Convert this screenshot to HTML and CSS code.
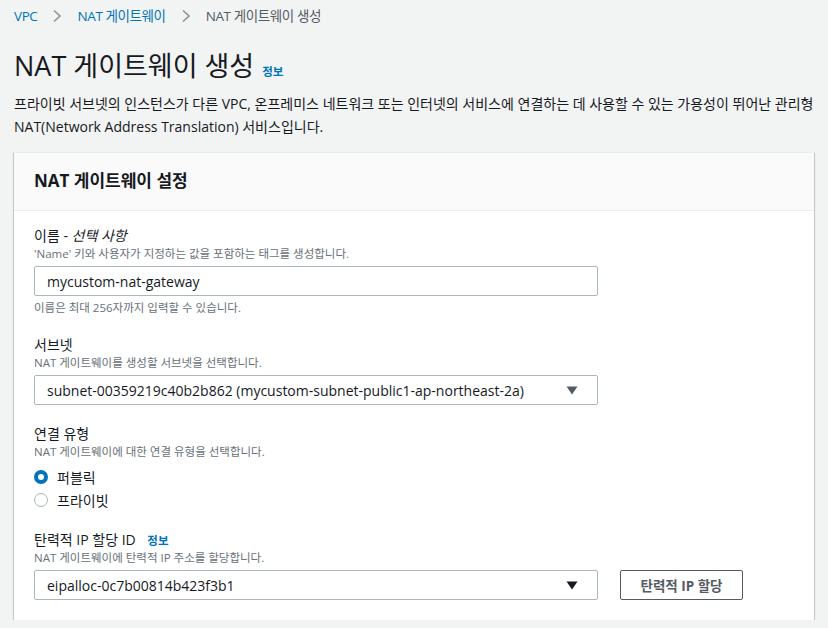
FILE: index.html
```html
<!DOCTYPE html>
<html lang="ko">
<head>
<meta charset="utf-8">
<link rel="stylesheet" href="styles.css">
</head>
<body>
<nav class="crumbs">
  <a class="crumb-link">VPC</a>
  <svg class="sep" width="10" height="14" viewBox="0 0 10 14"><path d="M2 1.5 L8 7 L2 12.5" fill="none" stroke="#879596" stroke-width="1.6"/></svg>
  <a class="crumb-link">NAT 게이트웨이</a>
  <svg class="sep" width="10" height="14" viewBox="0 0 10 14"><path d="M2 1.5 L8 7 L2 12.5" fill="none" stroke="#879596" stroke-width="1.6"/></svg>
  <span class="crumb-current">NAT 게이트웨이 생성</span>
</nav>

<h1 class="title"><span>NAT 게이트웨이 생성</span><a class="info">정보</a></h1>

<p class="intro">프라이빗 서브넷의 인스턴스가 다른 VPC, 온프레미스 네트워크 또는 인터넷의 서비스에 연결하는 데 사용할 수 있는 가용성이 뛰어난 관리형 NAT(Network Address Translation) 서비스입니다.</p>

<section class="card">
  <header class="card-head">NAT 게이트웨이 설정</header>
  <div class="card-body">
    <div class="field">
      <div class="label">이름 - <em>선택 사항</em></div>
      <div class="desc">'Name' 키와 사용자가 지정하는 값을 포함하는 태그를 생성합니다.</div>
      <div class="input">mycustom-nat-gateway</div>
      <div class="hint">이름은 최대 256자까지 입력할 수 있습니다.</div>
    </div>

    <div class="field">
      <div class="label">서브넷</div>
      <div class="desc">NAT 게이트웨이를 생성할 서브넷을 선택합니다.</div>
      <div class="input select">
        <span>subnet-00359219c40b2b862 (mycustom-subnet-public1-ap-northeast-2a)</span>
        <svg class="caret" width="12" height="9" viewBox="0 0 12 9"><path d="M0.5 0.5 H11.5 L6 8.5 Z" fill="#545b64"/></svg>
      </div>
    </div>

    <div class="field">
      <div class="label">연결 유형</div>
      <div class="desc">NAT 게이트웨이에 대한 연결 유형을 선택합니다.</div>
      <div class="radios">
        <div class="radio"><span class="dot on"></span><span>퍼블릭</span></div>
        <div class="radio"><span class="dot"></span><span>프라이빗</span></div>
      </div>
    </div>

    <div class="field">
      <div class="label">탄력적 IP 할당 ID <a class="info small">정보</a></div>
      <div class="desc">NAT 게이트웨이에 탄력적 IP 주소를 할당합니다.</div>
      <div class="row">
        <div class="input select">
          <span>eipalloc-0c7b00814b423f3b1</span>
          <svg class="caret dark" width="12" height="9" viewBox="0 0 12 9"><path d="M0.5 0.5 H11.5 L6 8.5 Z" fill="#16191f"/></svg>
        </div>
        <button class="btn">탄력적 IP 할당</button>
      </div>
    </div>
  </div>
</section>
</body>
</html>
```

FILE: styles.css
```css
* { box-sizing: border-box; }
html, body { margin: 0; padding: 0; }
body {
  background: #f2f3f3;
  color: #16191f;
  font-family: "Open Sans", "Noto Sans CJK KR", sans-serif;
  font-size: 14px;
  padding: 0 14px;
}
.crumbs {
  display: flex;
  align-items: center;
  gap: 14px;
  padding-top: 6px;
  height: 26px;
  line-height: 20px;
  font-size: 13.5px;
  letter-spacing: -0.4px;
}
.crumbs > * { height: 20px; display: flex; align-items: center; }
.crumb-link { color: #0073bb; }
.crumb-current { color: #545b64; }
.sep { display: block; margin: 0 1px; }
.title {
  margin: 22px 0 0;
  height: 36px;
  display: flex;
  align-items: baseline;
  font-size: 27px;
  line-height: 36px;
  font-weight: 400;
  color: #16191f;
}
.info {
  font-size: 11.5px;
  font-weight: 700;
  color: #0073bb;
  margin-left: 8px;
  letter-spacing: 0;
}
.info.small { margin-left: 8px; }
.intro {
  margin: 9px 0 0;
  height: 45px;
  overflow: visible;
  font-size: 14px;
  line-height: 22.5px;
}
.card {
  margin-top: 14px;
  width: 800px;
  background: #fff;
  box-shadow: 0 1px 1px 0 rgba(0, 28, 36, 0.3), 1px 1px 1px 0 rgba(0, 28, 36, 0.15), -1px 1px 1px 0 rgba(0, 28, 36, 0.15);
  border-top: 1px solid #eaeded;
}
.card-head {
  background: #fafafa;
  border-bottom: 1px solid #eaeded;
  padding: 15px 20px 16px;
  height: 58px;
  line-height: 26px;
  font-size: 17px;
  font-weight: 700;
}
.card-body {
  display: flex;
  flex-direction: column;
  gap: 19px;
  padding: 15px 20px 20px;
}
.field { display: flex; flex-direction: column; }
.label {
  height: 20px;
  font-size: 14px;
  line-height: 20px;
  color: #16191f;
  display: flex;
  align-items: baseline;
  white-space: pre;
}
.label em { font-style: italic; }
.desc, .hint {
  height: 16px;
  font-size: 11.5px;
  line-height: 16px;
  color: #687078;
}
.input {
  margin-top: 4px;
  width: 564px;
  height: 30px;
  flex: none;
  border: 1px solid #aab7b8;
  border-radius: 2px;
  padding: 0 12px;
  display: flex;
  align-items: center;
  font-size: 14px;
  color: #16191f;
  background: #fff;
}
.hint { margin-top: 4px; }
.select { justify-content: space-between; }
.select .caret { margin-right: 7px; }
.radios { margin-top: 5px; display: flex; flex-direction: column; }
.radio {
  height: 23px;
  display: flex;
  align-items: center;
  gap: 9px;
  font-size: 14px;
}
.dot {
  width: 14px;
  height: 14px;
  border-radius: 50%;
  border: 1px solid #aab7b8;
  background: #fff;
}
.dot.on { border: 4px solid #0073bb; }
.row { display: flex; align-items: flex-end; gap: 22px; margin-top: 4px; }
.row .input { margin-top: 0; }
.btn {
  height: 30px;
  width: 123px;
  background: #fff;
  border: 1px solid #545b64;
  border-radius: 2px;
  font-family: inherit;
  font-size: 13.5px;
  font-weight: 700;
  color: #545b64;
  padding: 0;
}
```
